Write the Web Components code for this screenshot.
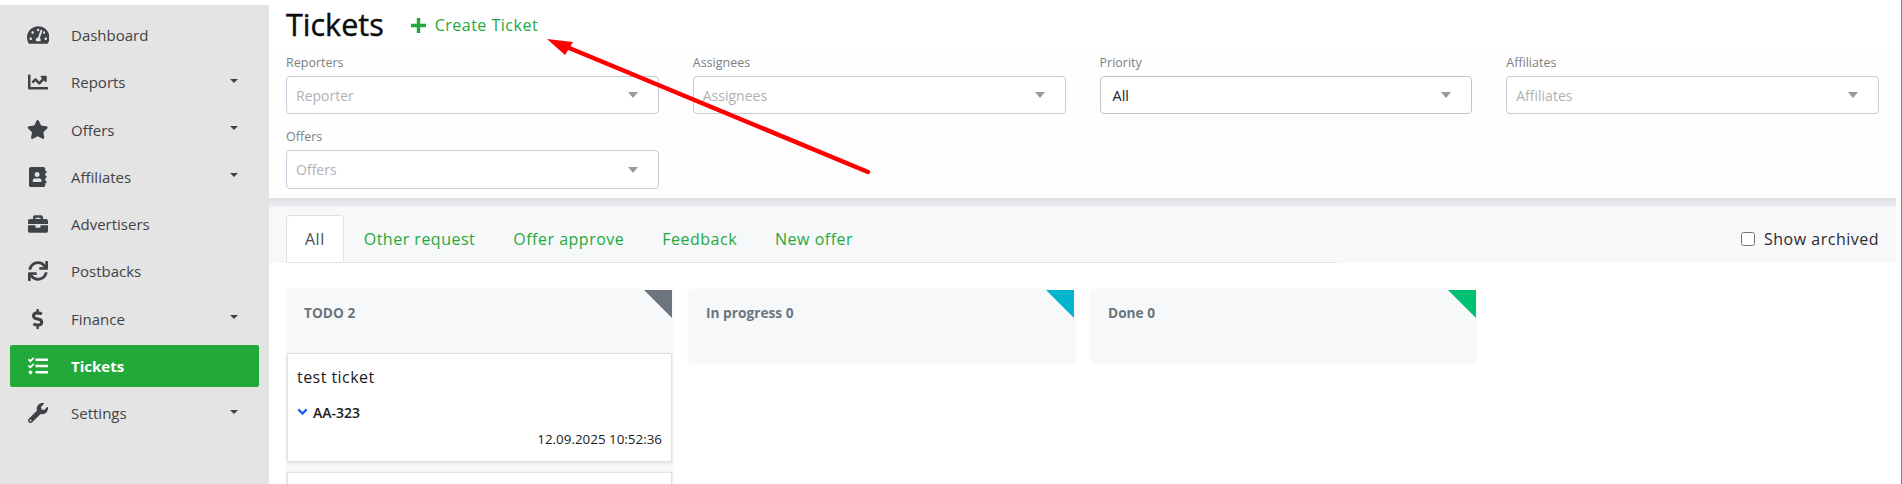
<!DOCTYPE html>
<html>
<head>
<meta charset="utf-8">
<title>Tickets</title>
<style>
  html, body { margin: 0; height: 484px; overflow: hidden; background: #fff; }
  body { font-family: "Open Sans", "Noto Sans", sans-serif; }
</style>
</head>
<body>
<app-shell>
  <side-nav slot="nav"></side-nav>
  <filter-panel></filter-panel>
  <ticket-tabs></ticket-tabs>
  <ticket-board></ticket-board>
</app-shell>

<script>
const ICONS = {
  dashboard: ['0 0 576 512', 'M288 32C128.94 32 0 160.94 0 320c0 52.8 14.25 102.26 39.06 144.8 5.61 9.62 16.3 15.2 27.44 15.2h443c11.14 0 21.83-5.58 27.44-15.2C561.75 422.26 576 372.8 576 320c0-159.06-128.94-288-288-288zm0 64c14.71 0 26.58 10.13 30.32 23.65-1.11 2.26-2.64 4.23-3.45 6.67l-9.22 27.67c-5.13 3.49-10.97 6.01-17.64 6.01-17.67 0-32-14.33-32-32S270.33 96 288 96zM96 384c-17.67 0-32-14.33-32-32s14.33-32 32-32 32 14.33 32 32-14.33 32-32 32zm48-160c-17.67 0-32-14.33-32-32s14.33-32 32-32 32 14.33 32 32-14.33 32-32 32zm246.77-72.41l-61.33 184C343.13 347.33 352 364.54 352 384c0 11.72-3.38 22.55-8.88 32H232.88c-5.5-9.45-8.88-20.28-8.88-32 0-33.94 26.5-61.43 59.9-63.59l61.34-184.01c4.17-12.56 17.73-19.45 30.36-15.17 12.57 4.19 19.35 17.79 15.17 30.36zm14.66 57.2l15.52-46.55c3.47-1.29 7.13-2.23 11.05-2.23 17.67 0 32 14.33 32 32s-14.33 32-32 32c-11.38-.01-20.89-6.28-26.57-15.22zM480 384c-17.67 0-32-14.33-32-32s14.33-32 32-32 32 14.33 32 32-14.33 32-32 32z'],
  reports: ['0 0 512 512', 'M496 384H64V80c0-8.84-7.16-16-16-16H16C7.16 64 0 71.16 0 80v336c0 17.67 14.33 32 32 32h464c8.84 0 16-7.16 16-16v-32c0-8.84-7.16-16-16-16zM464 96H345.94c-21.38 0-32.09 25.85-16.97 40.97l32.4 32.4L288 242.75l-73.37-73.37c-12.5-12.5-32.76-12.5-45.25 0l-68.69 68.69c-6.25 6.25-6.25 16.38 0 22.63l22.62 22.62c6.25 6.25 16.38 6.25 22.63 0L192 237.25l73.37 73.37c12.5 12.5 32.76 12.5 45.25 0l96-96 32.4 32.4c15.12 15.12 40.97 4.41 40.97-16.97V112c.01-8.84-7.15-16-15.99-16z'],
  offers: ['0 0 576 512', 'M259.3 17.8L194 150.2 47.9 171.5c-26.2 3.8-36.7 36.1-17.7 54.6l105.7 103-25 145.5c-4.5 26.3 23.2 46 46.4 33.7L288 439.6l130.7 68.7c23.2 12.2 50.9-7.4 46.4-33.7l-25-145.5 105.7-103c19-18.5 8.5-50.8-17.7-54.6L382 150.2 316.7 17.8c-11.7-23.6-45.6-23.9-57.4 0z'],
  affiliates: ['0 0 448 512', 'M436 160c6.6 0 12-5.4 12-12v-40c0-6.6-5.4-12-12-12h-20V48c0-26.5-21.5-48-48-48H48C21.5 0 0 21.5 0 48v416c0 26.5 21.5 48 48 48h320c26.5 0 48-21.5 48-48v-48h20c6.6 0 12-5.4 12-12v-40c0-6.6-5.4-12-12-12h-20v-64h20c6.6 0 12-5.4 12-12v-40c0-6.6-5.4-12-12-12h-20v-64h20zm-228-32c35.3 0 64 28.7 64 64s-28.7 64-64 64-64-28.7-64-64 28.7-64 64-64zm112 236.8c0 10.6-10 19.2-22.4 19.2H118.4C106 384 96 375.4 96 364.8v-19.2c0-31.8 30.1-57.6 67.2-57.6h5c12.3 5.1 25.7 8 39.8 8s27.6-2.9 39.8-8h5c37.1 0 67.2 25.8 67.2 57.6v19.2z'],
  advertisers: ['0 0 512 512', 'M320 336c0 8.84-7.16 16-16 16h-96c-8.84 0-16-7.16-16-16v-48H0v144c0 25.6 22.4 48 48 48h416c25.6 0 48-22.4 48-48V288H320v48zm144-208h-80V80c0-25.6-22.4-48-48-48H176c-25.6 0-48 22.4-48 48v48H48c-25.6 0-48 22.4-48 48v80h512v-80c0-25.6-22.4-48-48-48zm-144 0H192V96h128v32z'],
  postbacks: ['0 0 512 512', 'M440.65 12.57l4 82.77A247.16 247.16 0 0 0 255.83 8C134.73 8 33.91 94.92 12.29 209.82A12 12 0 0 0 24.09 224h49.05a12 12 0 0 0 11.67-9.26 175.91 175.91 0 0 1 317-56.94l-101.46-4.86a12 12 0 0 0-12.57 12v47.41a12 12 0 0 0 12 12H500a12 12 0 0 0 12-12V12a12 12 0 0 0-12-12h-47.37a12 12 0 0 0-11.98 12.57zM255.83 432a175.61 175.61 0 0 1-146-77.8l101.8 4.87a12 12 0 0 0 12.57-12v-47.4a12 12 0 0 0-12-12H12a12 12 0 0 0-12 12V500a12 12 0 0 0 12 12h47.35a12 12 0 0 0 12-12.6l-4.15-82.57A247.17 247.17 0 0 0 255.83 504c121.11 0 221.93-86.92 243.55-201.82a12 12 0 0 0-11.8-14.18h-49.05a12 12 0 0 0-11.67 9.26A175.86 175.86 0 0 1 255.83 432z'],
  finance: ['0 0 288 512', 'M209.2 233.4l-108-31.6C88.7 198.2 80 186.5 80 173.5c0-16.3 13.2-29.5 29.5-29.5h66.3c12.2 0 24.2 3.7 34.2 10.5 6.1 4.1 14.3 3.1 19.5-2l34.8-34c7.1-6.9 6.1-18.4-1.8-24.5C238 74.8 207.4 64.1 176 64V16c0-8.8-7.2-16-16-16h-32c-8.8 0-16 7.2-16 16v48h-2.5C45.8 64-5.4 118.7.5 183.6c4.2 46.1 39.4 83.6 83.8 96.6l102.5 30c12.5 3.7 21.2 15.3 21.2 28.3 0 16.3-13.2 29.5-29.5 29.5h-66.3C100 368 88 364.3 78 357.5c-6.1-4.1-14.3-3.1-19.5 2l-34.8 34c-7.1 6.9-6.1 18.4 1.8 24.5 24.5 19.2 55.1 29.9 86.5 30v48c0 8.8 7.2 16 16 16h32c8.8 0 16-7.2 16-16v-48.2c46.6-.9 90.3-28.6 105.7-72.7 21.5-61.6-14.6-124.8-72.5-141.7z'],
  tickets: ['0 0 512 512', 'M139.61 35.5a12 12 0 0 0-17 0L58.93 98.81l-22.7-22.12a12 12 0 0 0-17 0L3.53 92.41a12 12 0 0 0 0 17l47.59 47.4a12.78 12.78 0 0 0 17.61 0l15.59-15.62L156.52 69a12.09 12.09 0 0 0 .09-17zm0 159.19a12 12 0 0 0-17 0l-63.68 63.72-22.7-22.1a12 12 0 0 0-17 0L3.53 252a12 12 0 0 0 0 17L51 316.5a12.77 12.77 0 0 0 17.6 0l15.7-15.69 72.2-72.22a12 12 0 0 0 .09-16.9zM64 368c-26.49 0-48.59 21.5-48.59 48S37.53 464 64 464a48 48 0 0 0 0-96zm432 16H208a16 16 0 0 0-16 16v32a16 16 0 0 0 16 16h288a16 16 0 0 0 16-16v-32a16 16 0 0 0-16-16zm0-320H208a16 16 0 0 0-16 16v32a16 16 0 0 0 16 16h288a16 16 0 0 0 16-16V80a16 16 0 0 0-16-16zm0 160H208a16 16 0 0 0-16 16v32a16 16 0 0 0 16 16h288a16 16 0 0 0 16-16v-32a16 16 0 0 0-16-16z'],
  settings: ['0 0 512 512', 'M507.73 109.1c-2.24-9.03-13.54-12.09-20.12-5.51l-74.36 74.36-67.88-11.31-11.31-67.88 74.36-74.36c6.62-6.62 3.43-17.9-5.66-20.16-47.38-11.74-99.55.91-136.58 37.93-39.64 39.64-50.55 97.1-34.05 147.2L18.74 402.76c-24.99 24.99-24.99 65.51 0 90.5 24.99 24.99 65.51 24.99 90.5 0l213.21-213.21c50.12 16.71 107.47 5.68 147.37-34.22 37.07-37.07 49.7-89.32 37.91-136.73zM64 472c-13.25 0-24-10.75-24-24 0-13.26 10.75-24 24-24s24 10.74 24 24c0 13.25-10.75 24-24 24z']
};

function icon(name, size) {
  const [box, d] = ICONS[name];
  return `<svg viewBox="${box}" height="${size}" fill="currentColor"><path d="${d}"/></svg>`;
}

class AppShell extends HTMLElement {
  constructor() {
    super();
    this.attachShadow({ mode: 'open' });
    this.shadowRoot.innerHTML = `
      <style>
        :host { display: grid; grid-template-columns: 269px 1627px 6px; height: 484px; overflow: hidden; position: relative; }
        main { min-width: 0; height: 484px; overflow: hidden; }
        .bar { background: #fdfdfd; border-right: 1px solid #808080; }
        svg { position: absolute; left: 0; top: 0; pointer-events: none; }
      </style>
      <slot name="nav"></slot>
      <main>
        <page-header></page-header>
        <slot></slot>
      </main>
      <div class="bar"></div>
      <svg width="1902" height="484">
        <line x1="868" y1="172" x2="562" y2="45" stroke="#f00" stroke-width="4.5" stroke-linecap="round"/>
        <polygon points="547,39 573,42 565,55" fill="#f00"/>
      </svg>
    `;
  }
}
customElements.define('app-shell', AppShell);

class SideNav extends HTMLElement {
  constructor() {
    super();
    this.attachShadow({ mode: 'open' });
    const items = [
      ['dashboard', 'Dashboard', false, 20],
      ['reports', 'Reports', true, 20],
      ['offers', 'Offers', true, 19],
      ['affiliates', 'Affiliates', true, 20],
      ['advertisers', 'Advertisers', false, 20],
      ['postbacks', 'Postbacks', false, 20],
      ['finance', 'Finance', true, 20],
      ['tickets', 'Tickets', false, 20],
      ['settings', 'Settings', true, 20]
    ];
    this.shadowRoot.innerHTML = `
      <style>
        :host { display: block; margin-top: 5px; height: 479px; background: #e4e4e4; padding: 9px 10px 0; box-sizing: border-box; }
        a { display: flex; align-items: center; height: 42px; margin-bottom: 5.25px; border-radius: 2px; color: #3f4347; font-size: 15px; }
        i { width: 28px; margin-left: 14px; margin-right: 19px; display: flex; justify-content: center; font-style: normal; }
        span { flex: 1; }
        b { width: 0; height: 0; margin-right: 21px; margin-bottom: 3px; border: 4px solid transparent; border-top-color: #3f4347; border-bottom: 0; }
        .on { background: #23a93a; color: #fff; font-weight: 700; }
      </style>
      ${items.map(([name, label, caret, size]) => `
        <a class="${name === 'tickets' ? 'on' : ''}">
          <i>${icon(name, size)}</i>
          <span>${label}</span>
          ${caret ? '<b></b>' : ''}
        </a>`).join('')}
    `;
  }
}
customElements.define('side-nav', SideNav);

class PageHeader extends HTMLElement {
  constructor() {
    super();
    this.attachShadow({ mode: 'open' });
    this.shadowRoot.innerHTML = `
      <style>
        :host { display: flex; align-items: center; height: 48px; padding-left: 17px; box-sizing: border-box; }
        h1 { margin: 0; font-size: 30.5px; font-weight: 400; color: #0b0b10; line-height: 44px; -webkit-text-stroke: .4px #0b0b10; }
        a { display: flex; align-items: center; margin-left: 27px; padding-top: 2px; font-size: 16px; color: #23a93a; letter-spacing: .5px; }
        svg { margin-right: 9px; }
      </style>
      <h1>Tickets</h1>
      <a><svg width="15" height="15" viewBox="0 0 15 15"><path d="M5.8 0h3.4v5.8H15v3.4H9.2V15H5.8V9.2H0V5.8h5.8z" fill="#23a93a"/></svg>Create Ticket</a>
    `;
  }
}
customElements.define('page-header', PageHeader);

class FilterSelect extends HTMLElement {
  constructor() {
    super();
    this.attachShadow({ mode: 'open' });
    const filled = this.hasAttribute('filled');
    const height = this.hasAttribute('tall') ? 39 : 38;
    this.shadowRoot.innerHTML = `
      <style>
        :host { display: block; }
        label { display: block; height: 28px; line-height: 30px; font-size: 12.5px; color: #7d7f84; }
        div { display: flex; align-items: center; height: ${height}px; box-sizing: border-box; border: 1px solid ${filled ? '#c4c4c4' : '#c9c9d9'}; border-radius: 4px; padding: 0 20px 0 9px; background: #fff; font-size: 14px; color: #b0b1b6; }
        div.filled { color: #22262a; padding-left: 12px; font-size: 14.5px; }
        span { flex: 1; }
        b { width: 0; height: 0; border: 5px solid transparent; border-top: 6px solid #9a9a9a; border-bottom: 0; }
      </style>
      <label>${this.getAttribute('label')}</label>
      <div class="${filled ? 'filled' : ''}"><span>${this.getAttribute('value')}</span><b></b></div>
    `;
  }
}
customElements.define('filter-select', FilterSelect);

class FilterPanel extends HTMLElement {
  constructor() {
    super();
    this.attachShadow({ mode: 'open' });
    this.shadowRoot.innerHTML = `
      <style>
        :host { display: grid; grid-template-columns: repeat(4, 1fr); grid-auto-rows: 66px; column-gap: 34px; row-gap: 8px; height: 150px; padding: 0 17px; box-sizing: border-box; background: #fefefe; }
      </style>
      <filter-select label="Reporters" value="Reporter"></filter-select>
      <filter-select label="Assignees" value="Assignees"></filter-select>
      <filter-select label="Priority" value="All" filled></filter-select>
      <filter-select label="Affiliates" value="Affiliates"></filter-select>
      <filter-select label="Offers" value="Offers" tall></filter-select>
    `;
  }
}
customElements.define('filter-panel', FilterPanel);

class TicketTabs extends HTMLElement {
  constructor() {
    super();
    this.attachShadow({ mode: 'open' });
    this.shadowRoot.innerHTML = `
      <style>
        :host { display: flex; align-items: flex-end; height: 65px; padding: 9px 17px 0; box-sizing: border-box; background: linear-gradient(#dcdee6, #eceef3) 0 0 / 100% 9px no-repeat, #f7f8fa; }
        ul { display: flex; align-items: flex-end; width: 1051px; height: 47px; margin: 0; padding: 0; list-style: none; border-bottom: 1px solid #dee2e6; box-sizing: border-box; font-size: 16px; letter-spacing: .5px; }
        li { height: 47px; box-sizing: border-box; line-height: 48px; padding: 0 19px; color: #23a93a; }
        li.on { background: #fff; color: #495057; border: 1px solid #dee2e6; border-bottom-color: #fff; border-radius: 4px 4px 0 0; padding: 0 18px; margin-right: 1px; line-height: 46px; }
        label { margin-left: auto; align-self: center; display: flex; align-items: center; font-size: 16px; letter-spacing: .5px; color: #2b2b30; margin-top: 8px; }
        i { width: 14px; height: 14px; box-sizing: border-box; margin-right: 9px; background: #fff; border: 1px solid #767676; border-radius: 2.5px; }
      </style>
      <ul>
        <li class="on">All</li>
        <li>Other request</li>
        <li>Offer approve</li>
        <li>Feedback</li>
        <li>New offer</li>
      </ul>
      <label><i></i>Show archived</label>
    `;
  }
}
customElements.define('ticket-tabs', TicketTabs);

class TicketCard extends HTMLElement {
  constructor() {
    super();
    this.attachShadow({ mode: 'open' });
    this.shadowRoot.innerHTML = `
      <style>
        :host { display: block; box-sizing: border-box; height: 109px; margin-bottom: 10px; padding: 0 9px; background: #fff; border: 1px solid #dfe1e6; box-shadow: 0 1px 3px rgba(0,0,0,.1); color: #1c1c22; }
        h4 { margin: 0; padding-top: 11px; font-size: 16px; letter-spacing: .45px; font-weight: 400; line-height: 24px; }
        p { display: flex; align-items: center; margin: 0; padding-top: 13px; height: 20px; font-size: 14px; font-weight: 600; }
        svg { margin-right: 5px; }
        time { display: block; margin-top: 8px; font-size: 13.4px; text-align: right; line-height: 18px; }
      </style>
      <h4><slot name="title"></slot></h4>
      <p><svg width="11" height="8" viewBox="0 0 11 8"><path d="M1.4 1.4l4.1 4.1 4.1-4.1" fill="none" stroke="#2160f5" stroke-width="2.4"/></svg><slot name="key"></slot></p>
      <time><slot name="date"></slot></time>
    `;
  }
}
customElements.define('ticket-card', TicketCard);

class BoardColumn extends HTMLElement {
  constructor() {
    super();
    this.attachShadow({ mode: 'open' });
    this.shadowRoot.innerHTML = `
      <style>
        :host { display: block; position: relative; align-self: start; box-sizing: border-box; background: #f7f8fa; box-shadow: 0 0 3px rgba(0,0,0,.07); min-height: 72px; padding-bottom: 9px; }
        h5 { margin: 0; height: 63px; box-sizing: border-box; padding: 14px 17px 0; font-size: 13.7px; font-weight: 700; line-height: 18px; color: #6c757d; }
        i { position: absolute; top: 0; right: 0; width: 0; height: 0; border-style: solid; border-width: 0 28px 28px 0; border-color: transparent var(--corner) transparent transparent; }
      </style>
      <i></i>
      <h5>${this.getAttribute('heading')}</h5>
      <slot></slot>
    `;
  }
}
customElements.define('board-column', BoardColumn);

class TicketBoard extends HTMLElement {
  constructor() {
    super();
    this.attachShadow({ mode: 'open' });
    this.shadowRoot.innerHTML = `
      <style>
        :host { display: grid; grid-template-columns: repeat(3, 385px); column-gap: 17px; padding: 27px 0 0 18px; }
      </style>
      <board-column heading="TODO 2" style="--corner:#6c757d">
        <ticket-card><span slot="title">test ticket</span><span slot="key">AA-323</span><span slot="date">12.09.2025 10:52:36</span></ticket-card>
        <ticket-card></ticket-card>
      </board-column>
      <board-column heading="In progress 0" style="--corner:#00b5cc"></board-column>
      <board-column heading="Done 0" style="--corner:#00c172"></board-column>
    `;
  }
}
customElements.define('ticket-board', TicketBoard);
</script>
</body>
</html>
